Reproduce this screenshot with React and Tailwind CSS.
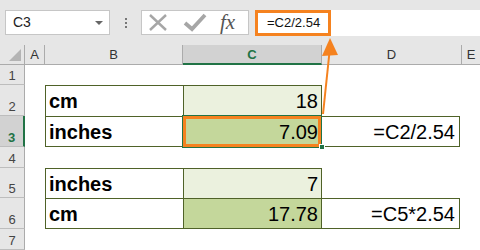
import React from "react";

const line = "border-[#4f6228]";

function RowHead({ n, h, active }) {
  return (
    <div
      className={
        "w-[25px] shrink-0 flex items-end justify-center pb-[2px] text-[13px] leading-none border-b border-[#bdbdbd] " +
        (active
          ? "bg-[#d2d2d2] text-[#217346] font-bold border-r-2 border-r-[#217346]"
          : "bg-[#e6e6e6] text-[#444] border-r border-r-[#ababab]")
      }
      style={{ height: h }}
    >
      {n}
    </div>
  );
}

export default function App() {
  return (
    <div className="w-[480px] h-[250px] overflow-hidden relative bg-white font-['Liberation_Sans',Arial,sans-serif] text-black">
      {/* name box + formula bar */}
      <div className="h-[45px] bg-[#e6e6e6] flex items-start pt-[10px]">
        <div className="ml-[5px] w-[105px] h-[25px] bg-white border border-[#c6c6c6] flex items-center justify-between pl-[7px] pr-[6px] text-[14px] text-[#222]">
          <span>C3</span>
          <span className="w-0 h-0 border-l-[4px] border-r-[4px] border-t-[4px] border-l-transparent border-r-transparent border-t-[#666]" />
        </div>
        <div className="w-[31px] h-[25px] flex flex-col items-center justify-center gap-[2px]">
          <span className="w-[2px] h-[2px] bg-[#777]" />
          <span className="w-[2px] h-[2px] bg-[#777]" />
          <span className="w-[2px] h-[2px] bg-[#777]" />
        </div>
        <div className="w-[108px] h-[25px] bg-white border border-[#c6c6c6] flex items-center">
          <svg width="70" height="23" viewBox="0 0 70 23" className="shrink-0">
            <path d="M8 4 L24 19 M24 4 L8 19" stroke="#a6a6a6" strokeWidth="2.4" fill="none" />
            <path d="M43 12 L50 18 L63 4" stroke="#a6a6a6" strokeWidth="3.8" fill="none" />
          </svg>
          <span className="ml-[8px] font-['Liberation_Serif',serif] italic text-[21px] text-[#555] leading-none">fx</span>
        </div>
        <div className="ml-[6px] flex-1 h-[26px] bg-white flex">
          <div className="w-[76px] h-full border-[3px] border-[#f5821f] flex items-center pl-[9px] text-[13px] text-[#111]">
            =C2/2.54
          </div>
        </div>
      </div>

      {/* column headers */}
      <div className="h-[20px] flex bg-[#e6e6e6] text-[13px] text-[#333] leading-none">
        <div className="w-[25px] shrink-0 border-r border-b border-[#ababab] relative">
          <span className="absolute right-[3px] bottom-[3px] w-0 h-0" style={{ borderBottom: "12px solid #b4b4b4", borderLeft: "12px solid transparent" }} />
        </div>
        <div className="w-[20px] shrink-0 border-r border-b border-[#ababab] flex items-center justify-center">A</div>
        <div className="w-[138px] shrink-0 border-r border-b border-[#ababab] flex items-center justify-center">B</div>
        <div className="w-[139px] shrink-0 bg-[#d2d2d2] border-r border-[#ababab] border-b-2 border-b-[#217346] flex items-center justify-center text-[#217346] font-bold">C</div>
        <div className="w-[140px] shrink-0 border-r border-b border-[#ababab] flex items-center justify-center">D</div>
        <div className="flex-1 border-b border-[#ababab] flex items-center justify-center">E</div>
      </div>

      {/* row 1 */}
      <div className="flex h-[20px]">
        <RowHead n="1" h={20} />
      </div>

      {/* rows 2-3 */}
      <div className="flex h-[31px] text-[20px] leading-none">
        <RowHead n="2" h={31} />
        <div className="w-[20px] shrink-0" />
        <div className={"w-[138px] shrink-0 border-l border-t " + line + " flex items-end pl-[3px] pb-[5px] font-bold"}>cm</div>
        <div className={"w-[139px] shrink-0 border-l border-t border-r " + line + " bg-[#ebf1de] flex items-end justify-end pr-[3px] pb-[5px]"}>18</div>
      </div>
      <div className="flex h-[31px] text-[20px] leading-none">
        <RowHead n="3" h={31} active />
        <div className="w-[20px] shrink-0" />
        <div className={"w-[138px] shrink-0 border-l border-t border-b " + line + " flex items-end pl-[3px] pb-[4px] font-bold"}>inches</div>
        <div className={"w-[139px] shrink-0 border-l border-t border-b border-r " + line + " bg-[#c4d79b] flex items-end justify-end pr-[3px] pb-[4px] relative"}>
          <div className="absolute -left-[2px] -top-[2px] -right-[1px] -bottom-[2px] border border-[#217346]">
            <div className="w-full h-full border-[3px] border-[#f5821f]" />
          </div>
          <span className="relative">7.09</span>
          <span className="absolute -right-[4px] -bottom-[4px] w-[6px] h-[6px] bg-[#217346] border border-white" />
        </div>
        <div className={"w-[138px] shrink-0 border-t border-b border-r " + line + " flex items-end justify-end pr-[4px] pb-[4px]"}>=C2/2.54</div>
      </div>

      {/* row 4 */}
      <div className="flex h-[21px]">
        <RowHead n="4" h={21} />
      </div>

      {/* rows 5-6 */}
      <div className="flex h-[30px] text-[20px] leading-none">
        <RowHead n="5" h={30} />
        <div className="w-[20px] shrink-0" />
        <div className={"w-[138px] shrink-0 border-l border-t " + line + " flex items-end pl-[3px] pb-[4px] font-bold"}>inches</div>
        <div className={"w-[139px] shrink-0 border-l border-t border-r " + line + " bg-[#ebf1de] flex items-end justify-end pr-[3px] pb-[4px]"}>7</div>
      </div>
      <div className="flex h-[31px] text-[20px] leading-none">
        <RowHead n="6" h={31} />
        <div className="w-[20px] shrink-0" />
        <div className={"w-[138px] shrink-0 border-l border-t border-b " + line + " flex items-end pl-[3px] pb-[4px] font-bold"}>cm</div>
        <div className={"w-[139px] shrink-0 border-l border-t border-b border-r " + line + " bg-[#c4d79b] flex items-end justify-end pr-[3px] pb-[4px]"}>17.78</div>
        <div className={"w-[138px] shrink-0 border-t border-b border-r " + line + " flex items-end justify-end pr-[4px] pb-[4px]"}>=C5*2.54</div>
      </div>

      {/* row 7 */}
      <div className="flex h-[21px]">
        <RowHead n="7" h={21} />
      </div>

      {/* callout arrow */}
      <svg className="absolute left-0 top-0 pointer-events-none" width="480" height="250" viewBox="0 0 480 250">
        <line x1="323" y1="114" x2="329.5" y2="52" stroke="#f5821f" strokeWidth="2" />
        <polygon points="330,38 322,56 338,55" fill="#f5821f" />
      </svg>
    </div>
  );
}
